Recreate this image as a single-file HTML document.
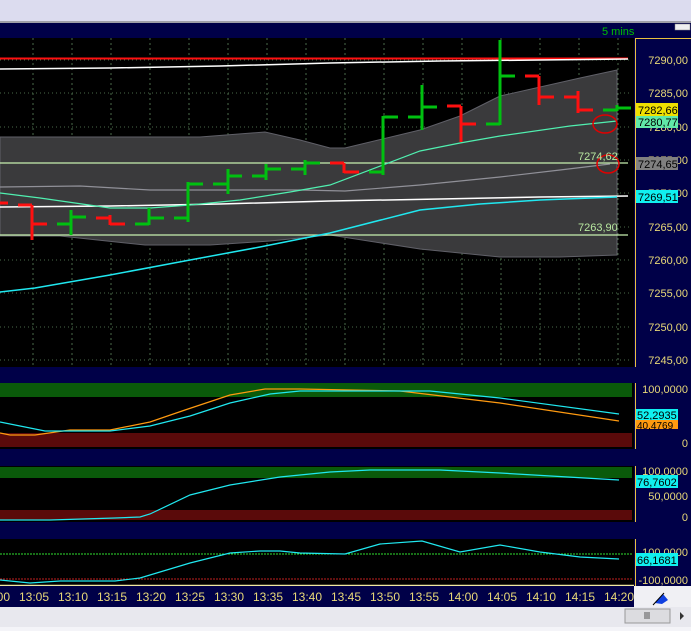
<!DOCTYPE html>
<html><head><meta charset="utf-8"><style>
html,body{margin:0;padding:0;background:#000;}
svg{display:block;font-family:"Liberation Sans",sans-serif;}
</style></head><body>
<svg width="691" height="631" viewBox="0 0 691 631" xmlns="http://www.w3.org/2000/svg">
<rect x="0" y="0" width="691" height="22" fill="#dcdcef"/>
<rect x="0" y="21" width="691" height="2" fill="#a0a0a8"/>
<rect x="0" y="23" width="691" height="15" fill="#000048"/>
<text x="602" y="35" fill="#00c000" font-size="11">5 mins</text>
<rect x="675" y="24" width="15" height="6" fill="#f0f0f0" stroke="#888" stroke-width="0.5"/>
<rect x="0" y="38" width="634" height="329" fill="#000"/>
<rect x="634" y="38" width="57" height="548" fill="#000048"/>
<line x1="635.5" y1="38" x2="635.5" y2="586" stroke="#e8c040" stroke-width="1"/>
<line x1="636" y1="38.5" x2="691" y2="38.5" stroke="#e8c040"/>
<g stroke="#4a6a4a" stroke-width="1" stroke-dasharray="1,3">
<line x1="0" y1="60" x2="632" y2="60"/><line x1="0" y1="93" x2="632" y2="93"/><line x1="0" y1="127" x2="632" y2="127"/><line x1="0" y1="160" x2="632" y2="160"/><line x1="0" y1="193" x2="632" y2="193"/><line x1="0" y1="227" x2="632" y2="227"/><line x1="0" y1="260" x2="632" y2="260"/><line x1="0" y1="293" x2="632" y2="293"/><line x1="0" y1="327" x2="632" y2="327"/><line x1="0" y1="360" x2="632" y2="360"/>
</g>
<g stroke="#4a6a4a" stroke-width="1" stroke-dasharray="2,3">
<line x1="33" y1="38" x2="33" y2="586"/><line x1="72" y1="38" x2="72" y2="586"/><line x1="111" y1="38" x2="111" y2="586"/><line x1="150" y1="38" x2="150" y2="586"/><line x1="189" y1="38" x2="189" y2="586"/><line x1="228" y1="38" x2="228" y2="586"/><line x1="267" y1="38" x2="267" y2="586"/><line x1="306" y1="38" x2="306" y2="586"/><line x1="345" y1="38" x2="345" y2="586"/><line x1="384" y1="38" x2="384" y2="586"/><line x1="423" y1="38" x2="423" y2="586"/><line x1="462" y1="38" x2="462" y2="586"/><line x1="501" y1="38" x2="501" y2="586"/><line x1="540" y1="38" x2="540" y2="586"/><line x1="579" y1="38" x2="579" y2="586"/><line x1="618" y1="38" x2="618" y2="586"/>
</g>
<polygon fill="#3a3a3c" stroke="#606068" stroke-width="1" points="0,137 200,137 265,132 300,140 330,148 345,148 420,130 460,116 500,96 580,78 617,70 617,255 560,257 500,257 420,249 330,235 270,241 210,245 145,245 60,236 0,236"/>
<line x1="0" y1="58.5" x2="628" y2="58.5" stroke="#ff1010" stroke-width="2"/>
<polyline fill="none" stroke="#fff" stroke-width="1.5" points="0,69 110,68 220,66 330,63 440,61 540,60 628,59"/>
<line x1="0" y1="163" x2="628" y2="163" stroke="#c8f0b0" stroke-width="1.2"/>
<line x1="0" y1="235" x2="628" y2="235" stroke="#c8f0b0" stroke-width="1.2"/>
<polyline fill="none" stroke="#fff" stroke-width="1.5" points="0,207 110,206 220,204 330,201 440,199 540,197 628,196"/>
<polyline fill="none" stroke="#909098" stroke-width="1.2" points="0,187 80,186 150,190 300,190 345,191 420,185 500,177 560,170 610,164"/>
<polyline fill="none" stroke="#50f0b0" stroke-width="1.2" points="0,193 40,198 110,208 150,208 190,205 240,200 290,192 330,185 420,151 460,143 500,136 570,126 617,121"/>
<polyline fill="none" stroke="#20e8f0" stroke-width="1.5" points="0,292 35,288 110,275 190,260 260,247 330,233 420,210 480,204 540,200 617,197"/>
<g stroke-width="3" fill="none">
<g stroke="#ff1010">
<path d="M0 203H8"/>
<path d="M32 205V240M18 205H32M32 224H47"/>
<path d="M110 215V225M96 218H110M110 224H125"/>
<path d="M344 163V173M330 163H344M344 172H359"/>
<path d="M461 106V142M447 106H461M461 124H476"/>
<path d="M539 76V105M525 76H539M539 97H554"/>
<path d="M578 91V113M564 97H578M578 110H593"/>
</g>
<g stroke="#00c010">
<path d="M71 210V235M57 224H71M71 217H86"/>
<path d="M149 208V225M135 224H149M149 218H164"/>
<path d="M188 182V222M174 218H188M188 184H203"/>
<path d="M228 169V194M213 184H228M228 176H242"/>
<path d="M266 164V180M252 176H266M266 169H281"/>
<path d="M305 160V175M291 169H305M305 163H320"/>
<path d="M383 116V175M369 172H383M383 117H398"/>
<path d="M422 85V130M408 117H422M422 107H437"/>
<path d="M500 40V125M486 124H500M500 76H515"/>
<path d="M617 105V111M603 110H617M617 108H631"/>
</g>
</g>
<ellipse cx="605" cy="124" rx="12" ry="9" fill="none" stroke="#e00000" stroke-width="1.5"/>
<ellipse cx="608" cy="164" rx="11" ry="9" fill="none" stroke="#e00000" stroke-width="1.5"/>
<g fill="#b8e8a0" font-size="11"><text x="578" y="160">7274,62</text><text x="578" y="231">7263,90</text></g>
<g fill="#e8d878" font-size="11" text-anchor="end">
<text x="688" y="64">7290,00</text><text x="688" y="97">7285,00</text><text x="688" y="131">7280,00</text><text x="688" y="164">7275,00</text><text x="688" y="197">7270,00</text><text x="688" y="231">7265,00</text><text x="688" y="264">7260,00</text><text x="688" y="297">7255,00</text><text x="688" y="331">7250,00</text><text x="688" y="364">7245,00</text>
</g>
<rect x="636" y="103" width="42" height="13" fill="#f0e000"/><text x="638" y="114" font-size="11" fill="#000">7282,66</text>
<rect x="636" y="116" width="42" height="12" fill="#60e8a8"/><text x="638" y="126" font-size="11" fill="#000">7280,77</text>
<rect x="636" y="157" width="42" height="13" fill="#808080"/><text x="638" y="168" font-size="11" fill="#000">7274,65</text>
<rect x="636" y="190" width="42" height="13" fill="#10f0f0"/><text x="638" y="201" font-size="11" fill="#000">7269,51</text>
<rect x="0" y="367" width="691" height="16" fill="#000048"/>
<rect x="0" y="449" width="691" height="17" fill="#000048"/>
<rect x="0" y="522" width="691" height="17" fill="#000048"/>
<rect x="0" y="383" width="634" height="66" fill="#000"/>
<rect x="0" y="383" width="632" height="14" fill="#0a5a0a"/>
<rect x="0" y="433" width="632" height="14" fill="#5a0a0a"/>
<polyline fill="none" stroke="#ff9a10" stroke-width="1.2" points="0,433 10,435 35,435 70,430 110,430 150,422 185,410 230,395 265,389 300,389 400,391 500,403 619,421"/>
<polyline fill="none" stroke="#20e8f0" stroke-width="1.2" points="0,422 45,431 110,431 150,426 190,416 230,403 270,394 300,391 430,391 500,398 619,414"/>
<rect x="0" y="466" width="634" height="56" fill="#000"/>
<rect x="0" y="467" width="632" height="11" fill="#0a5a0a"/>
<rect x="0" y="510" width="632" height="10" fill="#5a0a0a"/>
<polyline fill="none" stroke="#20e8f0" stroke-width="1.2" points="0,520 50,520 115,518 140,517 150,514 190,495 230,485 280,477 330,472 370,470 440,470 500,473 619,480"/>
<rect x="0" y="539" width="634" height="46" fill="#000"/>
<line x1="0" y1="554" x2="632" y2="554" stroke="#30e030" stroke-dasharray="2,1"/>
<line x1="0" y1="579" x2="632" y2="579" stroke="#c02020" stroke-dasharray="2,1"/>
<polyline fill="none" stroke="#20e8f0" stroke-width="1.2" points="0,580 30,583 60,581 115,581 140,578 190,563 230,553 260,551 280,551 300,553 345,554 380,544 422,541 460,552 500,545 540,552 580,557 619,559"/>
<g fill="#e8d878" font-size="11" text-anchor="end">
<text x="688" y="393">100,0000</text><text x="688" y="447">0</text>
<text x="688" y="475">100,0000</text><text x="688" y="500">50,0000</text><text x="688" y="521">0</text>
<text x="688" y="556">100,0000</text><text x="688" y="584">-100,0000</text>
</g>
<rect x="636" y="409" width="42" height="11" fill="#10f0f0"/><text x="637" y="419" font-size="11" fill="#000">52,2935</text>
<rect x="636" y="420" width="42" height="9" fill="#ff9a10"/><text x="637" y="429" font-size="10" fill="#000">40,4769</text>
<rect x="636" y="475" width="42" height="13" fill="#10f0f0"/><text x="637" y="486" font-size="11" fill="#000">76,7602</text>
<rect x="636" y="553" width="42" height="13" fill="#10f0f0"/><text x="637" y="564" font-size="11" fill="#000">66,1681</text>
<line x1="0" y1="585.5" x2="634" y2="585.5" stroke="#f0e8a0" stroke-width="1.5"/>
<rect x="0" y="586" width="634" height="21" fill="#000048"/>
<g fill="#e8d878" font-size="12" text-anchor="middle">
<text x="-5" y="601">13:00</text><text x="34" y="601">13:05</text><text x="73" y="601">13:10</text><text x="112" y="601">13:15</text><text x="151" y="601">13:20</text><text x="190" y="601">13:25</text><text x="229" y="601">13:30</text><text x="268" y="601">13:35</text><text x="307" y="601">13:40</text><text x="346" y="601">13:45</text><text x="385" y="601">13:50</text><text x="424" y="601">13:55</text><text x="463" y="601">14:00</text><text x="502" y="601">14:05</text><text x="541" y="601">14:10</text><text x="580" y="601">14:15</text><text x="619" y="601">14:20</text>
</g>
<rect x="634" y="586" width="57" height="21" fill="#f0f0f4"/>
<path d="M655 603 L663 594 L668 600 L662 604 Z" fill="#1040e0"/>
<line x1="653" y1="605" x2="664" y2="593" stroke="#000" stroke-width="1"/>
<rect x="0" y="607" width="691" height="24" fill="#e8e8ee"/>
<rect x="625" y="609" width="45" height="14" fill="#dcdce0" stroke="#999" stroke-width="1"/>
<g stroke="#555"><line x1="645" y1="612" x2="645" y2="619"/><line x1="647" y1="612" x2="647" y2="619"/><line x1="649" y1="612" x2="649" y2="619"/></g>
<path d="M680 612 L684 616 L680 620 Z" fill="#333"/>
<rect x="0" y="627" width="691" height="4" fill="#f4f4f8"/>
</svg>
</body></html>
